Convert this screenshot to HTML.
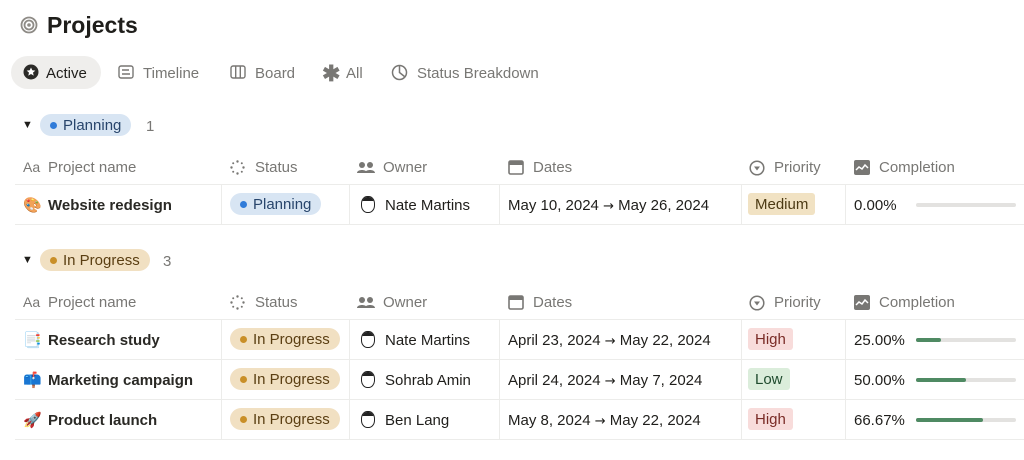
<!DOCTYPE html><html><head><style>
body{margin:0;width:1024px;height:460px;background:#fff;font-family:"Liberation Sans",sans-serif;color:#37352f;position:relative;overflow:hidden}
.a{position:absolute;white-space:nowrap}
.h{font-size:15px;color:#787774}
.c{font-size:15px;color:#1f1e1b}
.tag{position:absolute;height:22px;line-height:23px;border-radius:11px;padding:0 10px;font-size:15px}
.pl{background:#d8e5f3;color:#28456c}
.ip{background:#f1e0c2;color:#5a3e12}
.dot{display:inline-block;width:7px;height:7px;border-radius:50%;margin-right:6px;vertical-align:1px}
.hl{position:absolute;left:15px;right:0;height:1px;background:#ececea}
.vl{position:absolute;width:1px;background:#ececea}
.pr{position:absolute;height:22px;line-height:23px;border-radius:3px;padding:0 7px;font-size:15px}
.bar{position:absolute;left:916px;width:100px;height:4px;border-radius:2px;background:#e3e2e0}
.bar i{display:block;height:4px;border-radius:2px;background:#4f8a63}
.face{position:absolute;width:14px;height:17px;border:1.5px solid #222;border-radius:45%;box-sizing:border-box;background:#fff;overflow:hidden}
.face:before{content:"";position:absolute;left:0;top:0;right:0;height:4px;background:#222}
.ar{font-family:"DejaVu Sans",sans-serif;font-size:13px}
</style></head><body>
<svg class="a" style="left:20px;top:16px" width="18" height="18" viewBox="0 0 18 18"><circle cx="9" cy="9" r="7.5" fill="none" stroke="#8e8b86" stroke-width="1.8"/><circle cx="9" cy="9" r="4.5" fill="none" stroke="#8e8b86" stroke-width="1.8"/><circle cx="9" cy="9" r="1.8" fill="#8e8b86"/></svg>
<div class="a" style="left:47px;top:12px;font-size:23px;font-weight:bold;color:#1f1e1b">Projects</div>
<div class="a" style="left:11px;top:56px;width:90px;height:33px;border-radius:17px;background:#efeeec"></div>
<svg class="a" style="left:23px;top:64px" width="16" height="16" viewBox="0 0 16 16"><circle cx="8" cy="8" r="7.5" fill="#2b2a27"/><path d="M8 3.5l1.3 2.8 3 .3-2.3 2 .7 3-2.7-1.6-2.7 1.6.7-3-2.3-2 3-.3z" fill="#fff"/></svg>
<div class="a" style="left:46px;top:65px;font-size:15px;color:#1f1e1b">Active</div>
<svg class="a" style="left:118px;top:65px" width="16" height="14" viewBox="0 0 16 14"><rect x="1" y="1" width="14" height="12" rx="2" fill="none" stroke="#787774" stroke-width="1.4"/><path d="M4 5h7M4 9h8" stroke="#787774" stroke-width="1.4"/></svg>
<div class="a h" style="left:143px;top:65px">Timeline</div>
<svg class="a" style="left:230px;top:65px" width="16" height="14" viewBox="0 0 16 14"><rect x="1" y="1" width="14" height="12" rx="2" fill="none" stroke="#787774" stroke-width="1.4"/><path d="M5.7 1v12M10.3 1v12" stroke="#787774" stroke-width="1.4"/></svg>
<div class="a h" style="left:255px;top:65px">Board</div>
<div class="a" style="left:322px;top:61px;font-size:22px;color:#787774;font-weight:bold">✱</div>
<div class="a h" style="left:346px;top:65px">All</div>
<svg class="a" style="left:391px;top:64px" width="17" height="17" viewBox="0 0 17 17"><circle cx="8.5" cy="8.5" r="7" fill="none" stroke="#787774" stroke-width="1.5"/><path d="M8.5 1.5v7l5 4" fill="none" stroke="#787774" stroke-width="1.5"/></svg>
<div class="a h" style="left:417px;top:65px">Status Breakdown</div>

<div class="a" style="left:22px;top:119px;font-size:11px;color:#1f1e1b">▼</div>
<div class="tag pl" style="left:40px;top:114px"><span class="dot" style="background:#2f7bd9"></span>Planning</div>
<div class="a h" style="left:146px;top:118px">1</div>
<div class="a" style="left:22px;top:254px;font-size:11px;color:#1f1e1b">▼</div>
<div class="tag ip" style="left:40px;top:249px"><span class="dot" style="background:#c98f28"></span>In Progress</div>
<div class="a h" style="left:163px;top:253px">3</div>

<div id="hdr"></div>
<script>
function hdr(y){return `
<div class="a h" style="left:23px;top:${y}px;font-size:14px">Aa</div><div class="a h" style="left:48px;top:${y}px">Project name</div>
<svg class="a" style="left:230px;top:${y+1}px" width="15" height="15" viewBox="0 0 15 15" fill="#787774"><circle cx="7.5" cy="1.5" r="1.2"/><circle cx="7.5" cy="13.5" r="1.2"/><circle cx="1.5" cy="7.5" r="1.2"/><circle cx="13.5" cy="7.5" r="1.2"/><circle cx="3.2" cy="3.2" r="1"/><circle cx="11.8" cy="3.2" r="1"/><circle cx="3.2" cy="11.8" r="1"/><circle cx="11.8" cy="11.8" r="1"/></svg><div class="a h" style="left:255px;top:${y}px">Status</div>
<svg class="a" style="left:357px;top:${y+2}px" width="18" height="13" viewBox="0 0 18 13"><circle cx="5" cy="4" r="3" fill="#787774"/><circle cx="13" cy="4" r="3" fill="#787774"/><path d="M0 12c0-4 10-4 10 0zM8 12c0-4 10-4 10 0z" fill="#787774"/></svg><div class="a h" style="left:383px;top:${y}px">Owner</div>
<svg class="a" style="left:508px;top:${y}px" width="16" height="16" viewBox="0 0 16 16"><rect x="1" y="2" width="14" height="13" rx="1.5" fill="none" stroke="#787774" stroke-width="1.6"/><rect x="1" y="2" width="14" height="4" fill="#787774"/></svg><div class="a h" style="left:533px;top:${y}px">Dates</div>
<svg class="a" style="left:749px;top:${y+1}px" width="16" height="16" viewBox="0 0 16 16"><circle cx="8" cy="8" r="6.8" fill="none" stroke="#787774" stroke-width="1.5"/><path d="M5 6.5h6L8 10.5z" fill="#787774"/></svg><div class="a h" style="left:774px;top:${y}px">Priority</div>
<svg class="a" style="left:854px;top:${y+1}px" width="16" height="15" viewBox="0 0 16 15"><rect x="0" y="0" width="16" height="15" rx="2" fill="#787774"/><path d="M2 10l3-3 3 2 3-4 3 3" fill="none" stroke="#fff" stroke-width="1.5"/></svg><div class="a h" style="left:879px;top:${y}px">Completion</div>`}
let s=hdr(159)+hdr(294);
function lines(t,b){let o='';[221,349,499,741,845].forEach(x=>o+=`<div class="vl" style="left:${x}px;top:${t}px;height:${b-t}px"></div>`);return o}
s+=`<div class="hl" style="top:184px"></div><div class="hl" style="top:224px"></div>`+lines(185,224);
s+=`<div class="hl" style="top:319px"></div><div class="hl" style="top:359px"></div><div class="hl" style="top:399px"></div><div class="hl" style="top:439px"></div>`+lines(320,439);
const rows=[[197,'🎨','Website redesign','pl','#2f7bd9','Planning','Nate Martins','May 10, 2024 <span class="ar">→</span> May 26, 2024','Medium','#f1e2c3','#4c3a14','0.00%',0],
[332,'📑','Research study','ip','#c98f28','In Progress','Nate Martins','April 23, 2024 <span class="ar">→</span> May 22, 2024','High','#f8dcdb','#7a2b26','25.00%',25],
[372,'📫','Marketing campaign','ip','#c98f28','In Progress','Sohrab Amin','April 24, 2024 <span class="ar">→</span> May 7, 2024','Low','#dbeddb','#1f4b2e','50.00%',50],
[412,'🚀','Product launch','ip','#c98f28','In Progress','Ben Lang','May 8, 2024 <span class="ar">→</span> May 22, 2024','High','#f8dcdb','#7a2b26','66.67%',67]];
rows.forEach(r=>{const y=r[0];s+=`
<div class="a" style="left:23px;top:${y-1}px;font-size:15px">${r[1]}</div><div class="a c" style="left:48px;top:${y}px;font-weight:bold;color:#2a2925">${r[2]}</div>
<div class="tag ${r[3]}" style="left:230px;top:${y-4}px"><span class="dot" style="background:${r[4]}"></span>${r[5]}</div>
<div class="face" style="left:361px;top:${y-1}px"></div><div class="a c" style="left:385px;top:${y}px">${r[6]}</div>
<div class="a c" style="left:508px;top:${y}px">${r[7]}</div>
<div class="pr" style="left:748px;top:${y-4}px;background:${r[9]};color:${r[10]}">${r[8]}</div>
<div class="a c" style="left:854px;top:${y}px">${r[11]}</div>
<div class="bar" style="top:${y+6}px"><i style="width:${r[12]}%"></i></div>`});
document.getElementById('hdr').outerHTML=s;
</script>
</body></html>
